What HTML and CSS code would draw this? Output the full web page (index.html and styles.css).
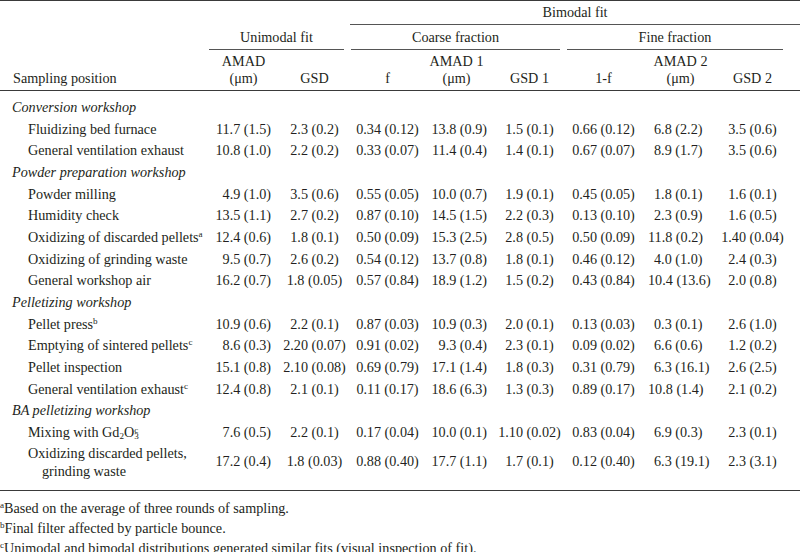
FILE: index.html
```html
<!DOCTYPE html>
<html lang="en">
<head>
<meta charset="utf-8">
<title>Particle size distributions</title>
<link rel="stylesheet" href="styles.css">
</head>
<body>
<table class="data">
  <colgroup>
    <col class="w-pos">
    <col class="w-amad">
    <col class="w-gsd">
    <col class="w-f">
    <col class="w-amad1">
    <col class="w-gsd1">
    <col class="w-1f">
    <col class="w-amad2">
    <col class="w-gsd2">
    <col class="w-end">
  </colgroup>
  <thead>
    <tr class="hr1">
      <th colspan="3"></th>
      <th colspan="7"><div class="grp grp-bi">Bimodal fit</div></th>
    </tr>
    <tr class="hr2">
      <th></th>
      <th colspan="2"><div class="grp">Unimodal fit</div></th>
      <th colspan="3"><div class="grp">Coarse fraction</div></th>
      <th colspan="3"><div class="grp">Fine fraction</div></th>
      <th></th>
    </tr>
    <tr class="hr3">
      <th class="h-pos">Sampling position</th>
      <th>AMAD<br>(μm)</th>
      <th>GSD</th>
      <th>f</th>
      <th class="h-amad1">AMAD 1<br>(μm)</th>
      <th>GSD 1</th>
      <th>1-f</th>
      <th>AMAD 2<br>(μm)</th>
      <th>GSD 2</th>
      <th></th>
    </tr>
  </thead>
  <tbody>
    <tr class="sec first"><td colspan="10">Conversion workshop</td></tr>
    <tr><td class="lbl">Fluidizing bed furnace</td><td class="r1">11.7 (1.5)</td><td>2.3 (0.2)</td><td>0.34 (0.12)</td><td class="r2">13.8 (0.9)</td><td>1.5 (0.1)</td><td>0.66 (0.12)</td><td class="dp one">6.8 (2.2)</td><td>3.5 (0.6)</td><td></td></tr>
    <tr><td class="lbl">General ventilation exhaust</td><td class="r1">10.8 (1.0)</td><td>2.2 (0.2)</td><td>0.33 (0.07)</td><td class="r2">11.4 (0.4)</td><td>1.4 (0.1)</td><td>0.67 (0.07)</td><td class="dp one">8.9 (1.7)</td><td>3.5 (0.6)</td><td></td></tr>
    <tr class="sec"><td colspan="10">Powder preparation workshop</td></tr>
    <tr><td class="lbl">Powder milling</td><td class="r1">4.9 (1.0)</td><td>3.5 (0.6)</td><td>0.55 (0.05)</td><td class="r2">10.0 (0.7)</td><td>1.9 (0.1)</td><td>0.45 (0.05)</td><td class="dp one">1.8 (0.1)</td><td>1.6 (0.1)</td><td></td></tr>
    <tr><td class="lbl">Humidity check</td><td class="r1">13.5 (1.1)</td><td>2.7 (0.2)</td><td>0.87 (0.10)</td><td class="r2">14.5 (1.5)</td><td>2.2 (0.3)</td><td>0.13 (0.10)</td><td class="dp one">2.3 (0.9)</td><td>1.6 (0.5)</td><td></td></tr>
    <tr><td class="lbl">Oxidizing of discarded pellets<sup>a</sup></td><td class="r1">12.4 (0.6)</td><td>1.8 (0.1)</td><td>0.50 (0.09)</td><td class="r2">15.3 (2.5)</td><td>2.8 (0.5)</td><td>0.50 (0.09)</td><td class="dp">11.8 (0.2)</td><td>1.40 (0.04)</td><td></td></tr>
    <tr><td class="lbl">Oxidizing of grinding waste</td><td class="r1">9.5 (0.7)</td><td>2.6 (0.2)</td><td>0.54 (0.12)</td><td class="r2">13.7 (0.8)</td><td>1.8 (0.1)</td><td>0.46 (0.12)</td><td class="dp one">4.0 (1.0)</td><td>2.4 (0.3)</td><td></td></tr>
    <tr><td class="lbl">General workshop air</td><td class="r1">16.2 (0.7)</td><td>1.8 (0.05)</td><td>0.57 (0.84)</td><td class="r2">18.9 (1.2)</td><td>1.5 (0.2)</td><td>0.43 (0.84)</td><td class="dp">10.4 (13.6)</td><td>2.0 (0.8)</td><td></td></tr>
    <tr class="sec"><td colspan="10">Pelletizing workshop</td></tr>
    <tr><td class="lbl">Pellet press<sup>b</sup></td><td class="r1">10.9 (0.6)</td><td>2.2 (0.1)</td><td>0.87 (0.03)</td><td class="r2">10.9 (0.3)</td><td>2.0 (0.1)</td><td>0.13 (0.03)</td><td class="dp one">0.3 (0.1)</td><td>2.6 (1.0)</td><td></td></tr>
    <tr><td class="lbl">Emptying of sintered pellets<sup>c</sup></td><td class="r1">8.6 (0.3)</td><td>2.20 (0.07)</td><td>0.91 (0.02)</td><td class="r2">9.3 (0.4)</td><td>2.3 (0.1)</td><td>0.09 (0.02)</td><td class="dp one">6.6 (0.6)</td><td>1.2 (0.2)</td><td></td></tr>
    <tr><td class="lbl">Pellet inspection</td><td class="r1">15.1 (0.8)</td><td>2.10 (0.08)</td><td>0.69 (0.79)</td><td class="r2">17.1 (1.4)</td><td>1.8 (0.3)</td><td>0.31 (0.79)</td><td class="dp one">6.3 (16.1)</td><td>2.6 (2.5)</td><td></td></tr>
    <tr><td class="lbl">General ventilation exhaust<sup>c</sup></td><td class="r1">12.4 (0.8)</td><td>2.1 (0.1)</td><td>0.11 (0.17)</td><td class="r2">18.6 (6.3)</td><td>1.3 (0.3)</td><td>0.89 (0.17)</td><td class="dp">10.8 (1.4)</td><td>2.1 (0.2)</td><td></td></tr>
    <tr class="sec"><td colspan="10">BA pelletizing workshop</td></tr>
    <tr><td class="lbl">Mixing with Gd<sub>2</sub>O<sub>3</sub><sup class="stack">c</sup></td><td class="r1">7.6 (0.5)</td><td>2.2 (0.1)</td><td>0.17 (0.04)</td><td class="r2">10.0 (0.1)</td><td>1.10 (0.02)</td><td>0.83 (0.04)</td><td class="dp one">6.9 (0.3)</td><td>2.3 (0.1)</td><td></td></tr>
    <tr class="last"><td class="lbl wrap">Oxidizing discarded pellets, grinding waste</td><td class="r1">17.2 (0.4)</td><td>1.8 (0.03)</td><td>0.88 (0.40)</td><td class="r2">17.7 (1.1)</td><td>1.7 (0.1)</td><td>0.12 (0.40)</td><td class="dp one">6.3 (19.1)</td><td>2.3 (3.1)</td><td></td></tr>
  </tbody>
</table>
<div class="notes">
  <p><sup>a</sup>Based on the average of three rounds of sampling.</p>
  <p><sup>b</sup>Final filter affected by particle bounce.</p>
  <p><sup>c</sup>Unimodal and bimodal distributions generated similar fits (visual inspection of fit).</p>
</div>
</body>
</html>
```

FILE: styles.css
```css
html, body {
  margin: 0;
  padding: 0;
  background: #ffffff;
}

body {
  width: 800px;
  font-family: "Liberation Serif", "Times New Roman", serif;
  font-size: 14.2px;
  color: #231f20;
}

.data {
  width: 800px;
  table-layout: fixed;
  border-collapse: separate;
  border-spacing: 0;
  border-top: 1px solid #3a3a3a;
  border-bottom: 1px solid #3a3a3a;
}

.w-pos { width: 206px; }
.w-amad { width: 75px; }
.w-gsd { width: 67px; }
.w-f { width: 79px; }
.w-amad1 { width: 68px; }
.w-gsd1 { width: 69px; }
.w-1f { width: 79px; }
.w-amad2 { width: 75px; }
.w-gsd2 { width: 69px; }
.w-end { width: 13px; }

.data th,
.data td {
  padding: 0;
  font-weight: normal;
  text-align: center;
  white-space: nowrap;
}

/* header */
.grp {
  line-height: 17px;
  border-bottom: 1px solid #555555;
  margin: 0 4px 0 3px;
}

.hr1 .grp {
  padding: 3px 0 3px;
}

.hr1 .grp-bi {
  margin: 0 0 0 2px;
}

.hr2 .grp {
  padding: 4px 0 3px;
}

.hr3 th {
  line-height: 17px;
  padding: 3px 0 3px;
  vertical-align: bottom;
  border-bottom: 1px solid #3a3a3a;
}

.hr3 .h-pos {
  text-align: left;
  padding-left: 13px;
}

.hr3 .h-amad1 {
  padding-right: 9px;
}

/* body */
.data tbody td {
  line-height: 21.67px;
  vertical-align: middle;
}

.sec td {
  text-align: left;
  font-style: italic;
  padding-left: 12px;
}

.sec.first td {
  padding-top: 6px;
}

.data td.lbl {
  text-align: left;
  padding-left: 28px;
}

.data td.r1 {
  text-align: right;
  padding-right: 10px;
}

.data td.r2 {
  text-align: right;
  padding-right: 8px;
}

.data td.dp {
  text-align: left;
  padding-left: 5px;
}

.data td.dp.one {
  padding-left: 11px;
}

.last td {
  padding-bottom: 10px;
}

.data .last td.wrap {
  white-space: normal;
  line-height: 18px;
  padding-left: 42px;
  text-indent: -14px;
}

sup {
  font-size: 0.64em;
  line-height: 0;
  vertical-align: 0.5em;
}

sub {
  font-size: 0.64em;
  line-height: 0;
  vertical-align: -0.25em;
}

/* note mark stacked above the subscript 3 */
sup.stack {
  margin-left: -4.6px;
}

/* footnotes */
.notes {
  margin-top: 7px;
}

.notes p {
  margin: 0;
  line-height: 20px;
}
```
